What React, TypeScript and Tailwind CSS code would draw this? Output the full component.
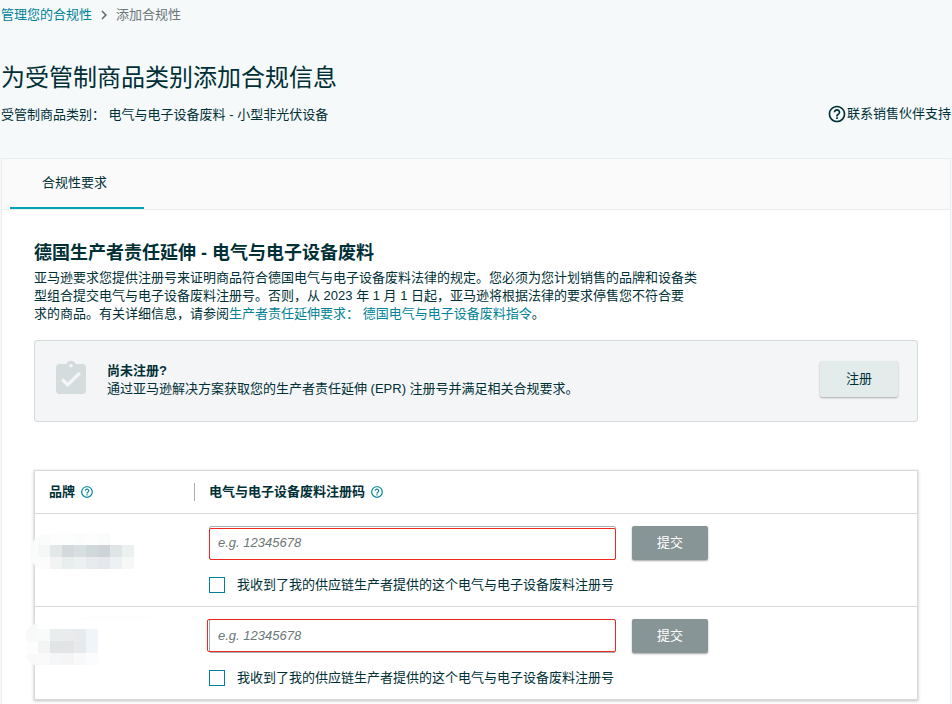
import { MdAssignmentTurnedIn, MdChevronRight, MdHelpOutline } from 'react-icons/md'

const rows = [
  { id: 'brand-1', frame: 'top-[2px] left-0 right-0 bottom-0' },
  { id: 'brand-2', frame: 'top-0 -left-[2px] right-0 bottom-[1px]' },
]

// masked brand names: [x, y, colour], each cell is 12px
const maskOne: [number, number, string][] = [
  [20, 0, '#fdfdfd'], [32, 0, '#fcfdfd'], [44, 0, '#fcfcfc'], [56, 0, '#fdfdfd'],
  [8, 12, '#f5f7f7'], [20, 12, '#e2e7e7'], [32, 12, '#d3d9dc'], [44, 12, '#d8dfe1'], [56, 12, '#d1d8db'], [68, 12, '#cdd4d7'], [80, 12, '#dfe5e6'], [92, 12, '#ebf0f1'],
  [8, 24, '#fcfcfc'], [20, 24, '#f2f4f4'], [32, 24, '#e8edee'], [44, 24, '#ebf0f2'], [56, 24, '#e7ebee'], [68, 24, '#e5e9ed'], [80, 24, '#ecf1f3'], [92, 24, '#f6f8f8'],
]
const maskTwo: [number, number, string][] = [
  [12, 8, '#f8fbfa'], [24, 8, '#e9edee'], [36, 8, '#e9ebec'], [48, 8, '#e7ebed'], [60, 8, '#f0f5f9'],
  [12, 20, '#f3f5f5'], [24, 20, '#e1e5e6'], [36, 20, '#e3e4e6'], [48, 20, '#e6eaec'], [60, 20, '#f0f5f9'],
  [12, 32, '#fafafa'], [24, 32, '#f5f6f7'], [36, 32, '#f5f5f6'], [48, 32, '#f8f9fa'], [60, 32, '#fbfcfd'],
]

const MaskedBrand = ({ index }: { index: number }) => {
  const cells = index === 0 ? maskOne : maskTwo
  return (
    <svg
      className={index === 0 ? 'absolute -left-[5px] top-[19px]' : 'absolute -left-[9px] top-[7px]'}
      width={index === 0 ? 104 : 128}
      height={index === 0 ? 38 : 52}
      aria-hidden="true"
    >
      {index === 0 ? (
        <path d="M8 35C2 31 0 25 0 19C0 11 3 7 8 4C14 0 26 0 80 0V12H8Z" fill="#fafbfb" />
      ) : (
        <>
          <path d="M12 9V53C6 50 2 47 0 44V17C4 12 8 10 12 9Z" fill="#f8faf9" />
          <path d="M0 28H12V40H0Z" fill="#fdfdfd" />
          <path d="M48 5C70 0 115 -1 128 5Z" fill="#fcfdfd" />
        </>
      )}
      {cells.map(([x, y, fill]) => (
        <rect key={`${x}-${y}`} x={x} y={index === 0 ? y : y + 7} width="12" height="12" fill={fill} />
      ))}
    </svg>
  )
}

const Breadcrumb = () => (
  <nav className="flex items-center">
    <a href="#" className="text-[#008296]">管理您的合规性</a>
    <MdChevronRight className="mx-[3px] size-[18px] text-[#5f6b6d]" />
    <span className="text-[#6c7778]">添加合规性</span>
  </nav>
)

export default function App() {
  return (
    <div className="min-h-screen bg-[#f5f9fa] px-px pt-[6px] font-['Liberation_Sans','Noto_Sans_CJK_SC',sans-serif] text-[13px] leading-[18px] text-[#002f36]">
      <Breadcrumb />

      <header className="mt-[38px] flex items-end justify-between">
        <div>
          <h1 className="text-2xl leading-8">为受管制商品类别添加合规信息</h1>
          <p className="mt-3">受管制商品类别： 电气与电子设备废料 - 小型非光伏设备</p>
        </div>
        <a href="#" className="flex items-center pt-1 leading-4">
          <MdHelpOutline className="size-5" />
          联系销售伙伴支持
        </a>
      </header>

      <main className="mt-[34px] border border-b-0 border-[#ebeeee] bg-white pb-1">
        <div role="tablist" className="flex border-b border-[#ebeeee] bg-[#fafafa] px-2">
          <button role="tab" aria-selected="true" className="h-[50px] border-b-2 border-[#00a4b4] px-8 pr-[37px]">
            合规性要求
          </button>
        </div>

        <div className="px-8 pt-[31px]">
          <h2 className="text-lg leading-6 font-bold">德国生产者责任延伸 - 电气与电子设备废料</h2>
          <p className="mt-1 max-w-[664px]">
            亚马逊要求您提供注册号来证明商品符合德国电气与电子设备废料法律的规定。您必须为您计划销售的品牌和设备类型组合提交电气与电子设备废料注册号。否则，从 2023 年 1 月 1 日起，亚马逊将根据法律的要求停售您不符合要
            <br />
            求的商品。有关详细信息，请参阅
            <a href="#" className="text-[#008296]">生产者责任延伸要求： 德国电气与电子设备废料指令</a>。
          </p>

          <section className="mt-[17px] flex items-center rounded-[3px] border border-[#d5dbdb] bg-[#f3f5f7] pt-[18px] pr-[19px] pb-[22px] pl-4">
            <MdAssignmentTurnedIn className="size-10 shrink-0 text-[#d5dcde]" />
            <div className="ml-4 grow pt-[2px]">
              <h3 className="font-bold">尚未注册?</h3>
              <p>通过亚马逊解决方案获取您的生产者责任延伸 (EPR) 注册号并满足相关合规要求。</p>
            </div>
            <button className="h-9 w-[78px] rounded-[2px] bg-[#e3ebeb] shadow-[0_1px_2px_rgba(0,0,0,0.3)]">注册</button>
          </section>

          <div className="mt-12 border border-[#d5dbdb] shadow-[0_1px_3px_rgba(0,0,0,0.25)]">
            <table className="w-full table-fixed border-collapse text-left">
              <thead>
                <tr className="h-[42px] border-b border-[#d5dbdb]">
                  <th className="w-[159px] p-0 pl-[14px]">
                    <div className="flex items-center gap-[5px]">
                      品牌
                      <MdHelpOutline className="size-[14px] text-[#008296]" />
                    </div>
                  </th>
                  <th className="p-0">
                    <div className="flex items-center gap-[5px] border-l border-[#a2b0b3] pl-[14px]">
                      电气与电子设备废料注册码
                      <MdHelpOutline className="size-[14px] text-[#008296]" />
                    </div>
                  </th>
                </tr>
              </thead>
              <tbody>
                {rows.map((row, index) => (
                  <tr key={row.id} className="border-b border-[#d5dbdb] last:border-b-0">
                    <td className="relative p-0">
                      <MaskedBrand index={index} />
                    </td>
                    <td className="py-3 pr-4 pl-[15px]">
                      <div className="flex gap-4">
                        <div className="relative w-[407px]">
                          <input
                            type="text"
                            aria-label="电气与电子设备废料注册码"
                            placeholder="e.g. 12345678"
                            className="block h-[34px] w-full rounded-[2px] border border-[#a2b0b3] px-2 placeholder:text-[#6c7778] placeholder:italic"
                          />
                          <span className={`pointer-events-none absolute rounded-[2px] border border-[#f0281e] ${row.frame}`} />
                        </div>
                        <button className="h-[34px] w-[76px] rounded-[2px] bg-[#879596] text-white shadow-[0_1px_2px_rgba(0,0,0,0.35)]">
                          提交
                        </button>
                      </div>
                      <div className="mt-4 flex items-center gap-3">
                        <input id={row.id} type="checkbox" className="size-4 appearance-none border border-[#008296] bg-white checked:bg-[#008296]" />
                        <label htmlFor={row.id}>我收到了我的供应链生产者提供的这个电气与电子设备废料注册号</label>
                      </div>
                    </td>
                  </tr>
                ))}
              </tbody>
            </table>
          </div>
        </div>
      </main>
    </div>
  )
}
